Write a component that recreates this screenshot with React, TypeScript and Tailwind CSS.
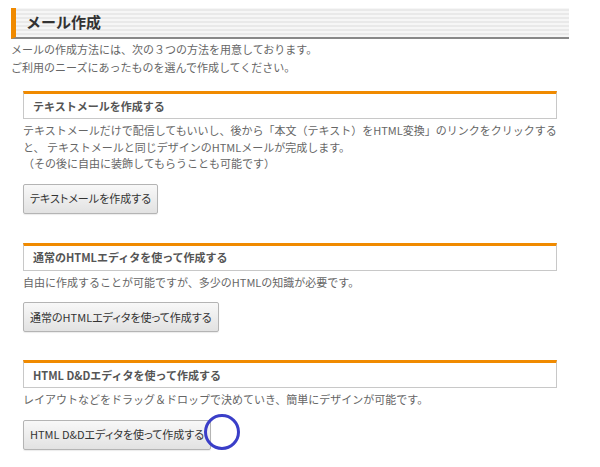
import React from "react";

const font = "[font-family:'Noto_Sans_CJK_JP','Noto_Sans',sans-serif]";

function Section({ title, lines, button, mt }: { title: string; lines: string[]; button: string; mt: string }) {
  return (
    <div className={`ml-[12px] w-[534px] ${mt}`}>
      <div className="h-[28px] border border-[#c8c8c8] border-t-[3px] border-t-[#f08a00] pl-[9px] flex items-center text-[11px] font-bold text-[#555] bg-white">
        {title}
      </div>
      <div className="mt-[3px] text-[11px] leading-[16.5px] text-[#666]">
        {lines.map((l, i) => (
          <div key={i} className="whitespace-nowrap">{l}</div>
        ))}
      </div>
      <button className="mt-[12px] h-[30px] px-[6px] border border-[#b4b4b4] rounded-[2px] bg-[linear-gradient(#f8f8f8,#e2e2e2)] text-[11px] text-[#333] [font-feature-settings:'palt'] shadow-[0_1px_1px_rgba(0,0,0,0.08)]">
        {button}
      </button>
    </div>
  );
}

export default function App() {
  return (
    <div className={`relative w-[600px] h-[467px] bg-white ${font}`}>
      <div className="pt-[8px] pl-[11px]">
        <div className="w-[558px] h-[31px] border-l-[5px] border-l-[#f08a00] border-b-2 border-b-[#888] bg-[repeating-linear-gradient(0deg,#f6f6f6_0px,#f6f6f6_2px,#e9e9e9_2px,#e9e9e9_4px)] flex items-center pl-[10px]">
          <span className="text-[15px] font-bold text-[#333]">メール作成</span>
        </div>
        <div className="mt-[1px] text-[11px] leading-[18px] text-[#666]">
          <div>メールの作成方法には、次の３つの方法を用意しております。</div>
          <div>ご利用のニーズにあったものを選んで作成してください。</div>
        </div>
      </div>
      <div className="pl-[11px]">
        <Section
          mt="mt-[15px]"
          title="テキストメールを作成する"
          lines={[
            "テキストメールだけで配信してもいいし、後から「本文（テキスト）をHTML変換」のリンクをクリックする",
            "と、 テキストメールと同じデザインのHTMLメールが完成します。",
            "（その後に自由に装飾してもらうことも可能です）",
          ]}
          button="テキストメールを作成する"
        />
        <Section
          mt="mt-[29px]"
          title="通常のHTMLエディタを使って作成する"
          lines={["自由に作成することが可能ですが、多少のHTMLの知識が必要です。"]}
          button="通常のHTMLエディタを使って作成する"
        />
        <Section
          mt="mt-[28px]"
          title="HTML D&Dエディタを使って作成する"
          lines={["レイアウトなどをドラッグ＆ドロップで決めていき、簡単にデザインが可能です。"]}
          button="HTML D&Dエディタを使って作成する"
        />
      </div>
      <div className="absolute left-[204px] top-[414px] w-[36px] h-[36px] rounded-full border-[3px] border-[#3a3ec8]" />
    </div>
  );
}
